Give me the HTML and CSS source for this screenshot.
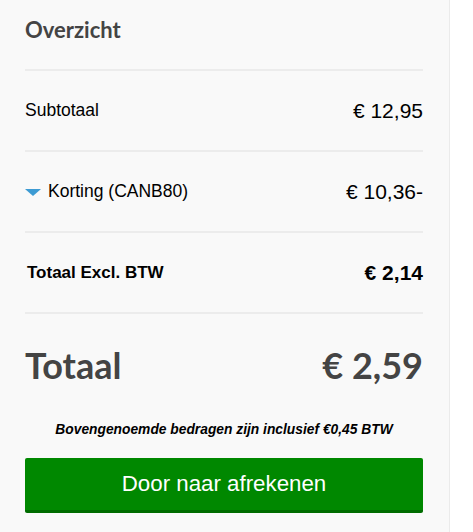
FILE: index.html
```html
<!DOCTYPE html>
<html lang="nl">
<head>
<meta charset="utf-8">
<title>Overzicht</title>
<link rel="stylesheet" href="styles.css">
</head>
<body>
<aside class="panel">
  <header class="panel-head">
    <h2 class="title">Overzicht</h2>
  </header>
  <div class="row">
    <span class="label">Subtotaal</span>
    <span class="value">€ 12,95</span>
  </div>
  <div class="row">
    <span class="label label-discount"><span class="caret"></span>Korting (CANB80)</span>
    <span class="value">€ 10,36-</span>
  </div>
  <div class="row row-strong">
    <span class="label">Totaal Excl. BTW</span>
    <span class="value">€ 2,14</span>
  </div>
  <div class="row row-total">
    <span class="total-label">Totaal</span>
    <span class="total-value">€ 2,59</span>
  </div>
  <p class="note">Bovengenoemde bedragen zijn inclusief €0,45 BTW</p>
  <button class="checkout" type="button">Door naar afrekenen</button>
</aside>
</body>
</html>
```
FILE: styles.css
```css
html, body {
  margin: 0;
  padding: 0;
  background: #ffffff;
}
body {
  font-family: "Liberation Sans", Arial, sans-serif;
  color: #000;
}
.panel {
  box-sizing: border-box;
  width: 450px;
  min-height: 532px;
  padding: 0 26px 0 25px;
  background: #f9f9f9;
  border-right: 1px solid #ebebeb;
  display: flex;
  flex-direction: column;
}
.panel-head {
  height: 69px;
  box-sizing: border-box;
  padding-top: 17px;
}
.title {
  margin: 0;
  font-family: Lato, sans-serif;
  font-weight: 700;
  font-size: 22px;
  line-height: 25px;
  color: #444444;
}
.row {
  border-top: 2px solid #ececec;
  height: 79px;
  display: flex;
  align-items: center;
  justify-content: space-between;
}
.label {
  font-size: 17.5px;
  display: flex;
  align-items: center;
}
.value {
  font-size: 21px;
}
.caret {
  width: 0;
  height: 0;
  border-left: 8.5px solid transparent;
  border-right: 8.5px solid transparent;
  border-top: 7px solid #3d9bd3;
  margin-right: 7px;
  margin-top: 2px;
}
.row-strong .label {
  font-weight: 700;
  font-size: 17px;
  padding-left: 2px;
}
.row-strong .value {
  font-weight: 700;
  font-size: 21px;
}
.row-total {
  height: 108px;
  padding-bottom: 4px;
  box-sizing: border-box;
  align-items: center;
}
.total-label, .total-value {
  font-family: Lato, sans-serif;
  font-weight: 700;
  font-size: 36px;
  line-height: 36px;
  color: #444444;
}
.note {
  margin: 0;
  text-align: center;
  font-size: 13.8px;
  font-weight: 700;
  font-style: italic;
  line-height: 20px;
}
.checkout {
  margin-top: 18px;
  height: 55px;
  width: 100%;
  border: 0;
  border-bottom: 3px solid #006c00;
  border-radius: 2px;
  background: #008800;
  color: #ffffff;
  font-family: "Liberation Sans", Arial, sans-serif;
  font-size: 22.3px;
  padding: 0;
}
```
